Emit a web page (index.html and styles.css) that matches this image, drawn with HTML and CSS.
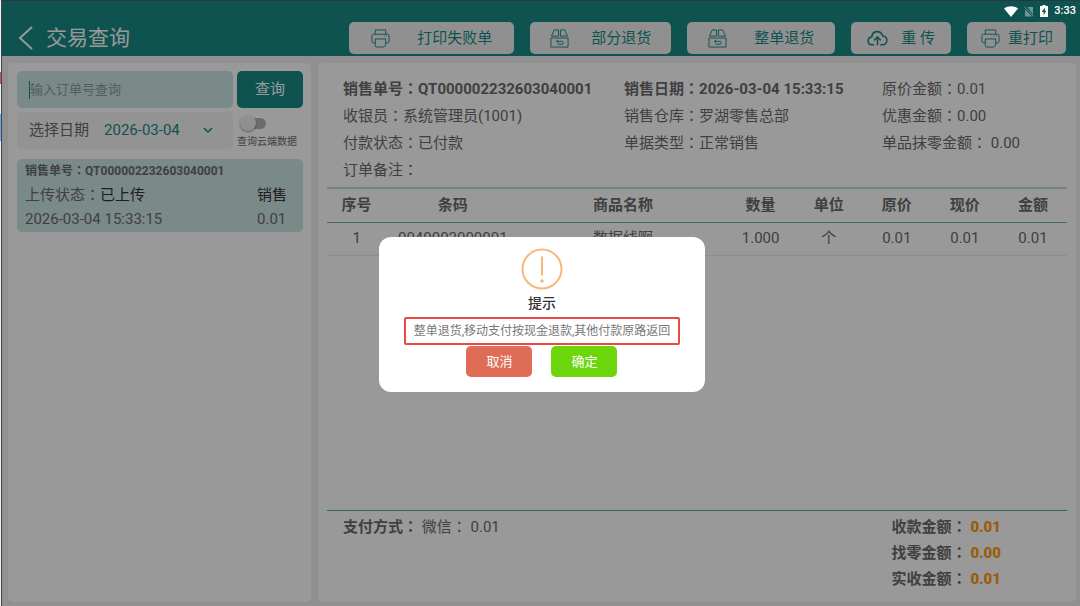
FILE: index.html
```html
<!DOCTYPE html>
<html lang="zh-CN">
<head>
<meta charset="utf-8">
<title>交易查询</title>
<link rel="stylesheet" href="styles.css">
</head>
<body>
<div class="edge"><i class="edge-red"></i><i class="edge-blue"></i></div>
<div class="app">
  <svg width="0" height="0" class="defs" aria-hidden="true">
    <symbol id="printer" viewBox="0 0 20 20">
      <path d="M4.500 5.500V1h11v4.500M4.500 14.500H2.500C1.500 14.500 1 14 1 13V7C1 6 1.500 5.500 2.500 5.500h15c1 0 1.500.500 1.500 1.500v6c0 1-.500 1.500-1.500 1.500h-2M4.500 10.500h11M4.500 10.500V17.500c0 1 .500 1.500 1.500 1.500h7.500l2-2v-6.500M13.500 7.500h.8M15.800 7.500h.8"/>
    </symbol>
    <symbol id="box" viewBox="0 0 20 20">
      <path d="M1 9.500v9.500h18V9.500zM1.500 7.500L4.500 1H9v6.500zM11 1h4.500L18.500 7.500H11zM8.500 11.500L6.800 13l1.700 1.500M6.800 13H13c1.300 0 1.300 3 0 3H8"/>
    </symbol>
    <symbol id="cloud" viewBox="0 0 22 18">
      <path d="M7.500 15.500H5.500C3 15.500 1.200 13.800 1.200 11.500S3 7.500 5 7.300C5.300 4 7.600 1.800 10.700 1.800c2.800 0 5 1.700 5.700 4.500 2.600.2 4.400 2 4.400 4.600s-1.800 4.600-4.300 4.600H14M11 16V8M7.500 11L11 7.500l3.500 3.500"/>
    </symbol>
  </svg>
  <header class="topbar">
    <button class="back" aria-label="返回"><svg viewBox="0 0 16 26"><path d="M14 2L2 13l12 11"/></svg></button>
    <h1 class="title">交易查询</h1>
    <nav class="actions">
      <button class="act act-fail"><svg class="ico"><use href="#printer"/></svg>打印失败单</button>
      <button class="act act-part"><svg class="ico"><use href="#box"/></svg>部分退货</button>
      <button class="act act-whole"><svg class="ico"><use href="#box"/></svg>整单退货</button>
      <button class="act act-upload"><svg class="ico ico-bold"><use href="#cloud"/></svg>重 传</button>
      <button class="act act-reprint"><svg class="ico"><use href="#printer"/></svg>重打印</button>
    </nav>
  </header>
  <main class="content">
    <aside class="panel side">
      <form class="search">
        <div class="field"><i class="caret"></i><input class="query" type="text" placeholder="输入订单号查询" aria-label="输入订单号查询"></div>
        <button class="go" type="button">查询</button>
        <div class="date">
          <label for="day">选择日期</label>
          <select id="day" class="day"><option>2026-03-04</option></select>
          <svg class="chev" viewBox="0 0 10 7"><path d="M1 1l4 4 4-4"/></svg>
        </div>
        <label class="cloud"><input class="switch" type="checkbox"><span>查询云端数据</span></label>
      </form>
      <article class="order">
        <p class="order-no">销售单号<span class="colon" lang="zh-TW">：</span>QT000002232603040001</p>
        <p class="order-row"><span>上传状态<span class="colon" lang="zh-TW">：</span><span class="dark">已上传</span></span><span class="kind dark">销售</span></p>
        <p class="order-row"><span>2026-03-04 15:33:15</span><span class="kind">0.01</span></p>
      </article>
    </aside>
    <section class="panel detail">
      <div class="info">
        <strong>销售单号<span class="colon" lang="zh-TW">：</span>QT000002232603040001</strong>
        <strong>销售日期<span class="colon" lang="zh-TW">：</span>2026-03-04 15:33:15</strong>
        <span>原价金额<span class="colon" lang="zh-TW">：</span>0.01</span>
        <span>收银员<span class="colon" lang="zh-TW">：</span>系统管理员(1001)</span>
        <span>销售仓库<span class="colon" lang="zh-TW">：</span>罗湖零售总部</span>
        <span>优惠金额<span class="colon" lang="zh-TW">：</span>0.00</span>
        <span>付款状态<span class="colon" lang="zh-TW">：</span>已付款</span>
        <span>单据类型<span class="colon" lang="zh-TW">：</span>正常销售</span>
        <span>单品抹零金额<span class="colon" lang="zh-TW">：</span> 0.00</span>
        <span>订单备注<span class="colon" lang="zh-TW">：</span></span>
      </div>
      <table class="goods">
        <colgroup><col class="c-no"><col class="c-code"><col class="c-name"><col><col><col><col><col></colgroup>
        <thead><tr><th>序号</th><th>条码</th><th>商品名称</th><th>数量</th><th>单位</th><th>原价</th><th>现价</th><th>金额</th></tr></thead>
        <tbody><tr><td>1</td><td>0040002000001</td><td>数据线啊</td><td>1.000</td><td>个</td><td>0.01</td><td>0.01</td><td>0.01</td></tr></tbody>
      </table>
      <footer class="pay">
        <p><strong>支付方式<span class="colon" lang="zh-TW">：</span></strong> 微信<span class="colon" lang="zh-TW">：</span> 0.01</p>
        <div class="sums">
          <p>收款金额<span class="colon" lang="zh-TW">：</span> <b>0.01</b></p>
          <p>找零金额<span class="colon" lang="zh-TW">：</span> <b>0.00</b></p>
          <p>实收金额<span class="colon" lang="zh-TW">：</span> <b>0.01</b></p>
        </div>
      </footer>
    </section>
  </main>
  <div class="overlay">
    <div class="dialog" role="dialog" aria-labelledby="tip">
      <svg class="warn" viewBox="0 0 42 42"><circle cx="21" cy="21" r="19.500"/><path d="M21 8.500v19"/><circle class="dot" cx="21" cy="33" r="1.800"/></svg>
      <h2 id="tip" class="tip">提示</h2>
      <p class="msg">整单退货,移动支付按现金退款,其他付款原路返回</p>
      <div class="choices"><button class="btn cancel">取消</button><button class="btn ok">确定</button></div>
    </div>
  </div>
  <div class="status">
    <svg class="s-wifi" viewBox="0 0 14 11"><path d="M0 2.500C4 -.6 10-.6 14 2.500L7 11z"/></svg>
    <svg class="s-sim" viewBox="0 0 10 11"><path d="M3.500 1H9v7.500zM1 3.500L8 10.500H1z"/><path class="slash" d="M.3.800l9.400 9.700"/></svg>
    <svg class="s-bat" viewBox="0 0 8 12"><path fill-rule="evenodd" d="M2.500 0h3v1H8v11H0V1h2.500zM4.800 2.500L1.800 7h1.800v3.200L6.300 5.800H4.800z"/></svg>
    <span>3:33</span>
  </div>
</div>
</body>
</html>
```
FILE: styles.css
```css
* { box-sizing: border-box; margin: 0; padding: 0; }
body {
  display: flex;
  min-height: 100vh;
  font: 15px/27px Roboto, "Noto Sans CJK SC", sans-serif;
  color: #6b6b6b;
}
button, input, select { font: inherit; color: inherit; border: 0; background: none; }
svg { fill: none; stroke: currentColor; display: block; }
.colon { font-family: "Noto Sans CJK TC", sans-serif; line-height: 1; }
.defs { position: absolute; }

.edge { width: 2px; background: #eef1f4; border-right: 1px solid #3c4650; }
.edge i { display: block; }
.edge-red { height: 12px; margin-top: 72px; background: #e5494b; }
.edge-blue { height: 27px; margin-top: 30px; background: #6fa8e8; }

.app {
  position: relative;
  flex: 1;
  display: flex;
  flex-direction: column;
  background: #f0f0f0;
  border-top: 1px solid #2b3646;
}

.topbar {
  display: flex;
  align-items: center;
  padding: 21px 14px 2px 16px;
  background: #198a87;
  color: #fff;
}
.back svg { width: 16px; height: 26px; stroke-width: 2; }
.title { margin-left: 12px; padding-top: 1px; font-size: 21px; font-weight: 400; line-height: 31px; }
.actions { display: flex; gap: 16px; margin-left: auto; }
.act {
  display: flex;
  align-items: center;
  height: 32px;
  border-radius: 5px;
  background: #f0f0f0;
  color: #198a87;
  white-space: nowrap;
}
.ico { width: 19px; height: 19px; stroke-width: 1; }
.ico-bold { width: 21px; stroke-width: 1.6; }
.act-fail { padding: 0 22px; gap: 27px; }
.act-part { padding: 0 20px; gap: 22px; }
.act-whole { padding: 0 21px; gap: 27px; }
.act-upload { padding: 0 16px; gap: 13px; }
.act-reprint { padding: 0 13px 0 14px; gap: 8px; }

.content { flex: 1; display: flex; gap: 7px; padding: 7px 4px 4px 6px; }
.panel { background: #fff; border-radius: 5px; }
.side { flex: 0 0 303px; padding: 8px 8px 8px 9px; }
.search { display: grid; grid-template-columns: 1fr 66px; gap: 4px; }
.field, .date { display: flex; align-items: center; height: 37px; border-radius: 5px; padding-left: 12px; }
.field { background: #cbe6e3; font-size: 13px; }
.caret { width: 1px; height: 18px; background: #198a87; }
.query { flex: 1; min-width: 0; outline: 0; }
.query::placeholder { color: #8c9a98; }
.go { border-radius: 5px; background: #198a87; color: #fff; }
.date { background: #f5f5f5; padding-right: 20px; }
.day { appearance: none; margin-left: 15px; color: #198a87; }
.chev { width: 10px; height: 7px; margin-left: auto; color: #198a87; stroke-width: 1.5; }
.cloud { display: flex; flex-direction: column; justify-content: space-between; padding-top: 3px; font-size: 10px; line-height: 14px; white-space: nowrap; isolation: isolate; }
.switch { appearance: none; width: 29px; height: 16px; padding-left: 3px; display: flex; align-items: center; }
.switch::before { content: ""; width: 16px; height: 16px; border-radius: 8px; background: #f1f1f1; box-shadow: 0 1px 2px #0006; z-index: 1; }
.switch::after { content: ""; width: 18px; height: 11px; margin-left: -8px; border-radius: 6px; background: #b4b4b4; }
.order { margin-top: 10px; padding: 0 16px 1px 8px; border-radius: 5px; background: #cbe6e3; line-height: 24px; }
.order-no { font-size: 12px; font-weight: 700; }
.order-row { display: flex; justify-content: space-between; }
.kind { width: 30px; }
.dark { color: #333; }

.detail { flex: 1; display: flex; flex-direction: column; padding: 13px 9px 10px; }
.info { display: grid; grid-template-columns: 281fr 258fr 185fr; padding: 0 0 3px 16px; white-space: nowrap; }
.goods { width: 100%; table-layout: fixed; border-collapse: collapse; text-align: center; }
.goods th { height: 34px; border-top: 2px solid #b9dcda; border-bottom: 1px solid #6fb3b0; }
.goods td { height: 33px; border-bottom: 1px solid #ececec; }
.c-no { width: 8%; }
.c-code { width: 18%; }
.c-name { width: 28%; }
.pay { display: flex; justify-content: space-between; margin-top: auto; padding: 3px 66px 0 16px; border-top: 1px solid #4fa9a6; line-height: 26px; }
.sums { font-weight: 700; }
.sums b { color: #ff9b1a; }

.overlay {
  position: absolute;
  inset: 0;
  display: flex;
  align-items: center;
  justify-content: center;
  padding: 22px 0 0 2px;
  background: rgba(0, 0, 0, .4);
}
.dialog { display: flex; flex-direction: column; align-items: center; padding: 11px 25px 15px; border-radius: 12px; background: #fff; }
.warn { width: 42px; height: 42px; color: #f9b878; stroke-width: 2; }
.dot { fill: currentColor; stroke: none; }
.tip { font-size: 14px; font-weight: 500; line-height: 27px; color: #333; }
.msg { padding: 0 8px; border: 2px solid #ea4a42; border-radius: 2px; font-size: 12px; line-height: 24px; color: #777; }
.choices { display: flex; gap: 19px; margin-top: 1px; }
.btn { width: 66px; height: 31px; border-radius: 5px; font-size: 13px; color: #fff; }
.cancel { background: #de6c56; }
.ok { background: #6cd60a; }

.status {
  position: absolute;
  top: 3px;
  right: 4px;
  display: flex;
  align-items: center;
  gap: 6px;
  font-size: 11px;
  font-weight: 500;
  line-height: 14px;
  color: #fff;
}
.status svg { fill: currentColor; stroke: none; }
.s-wifi { width: 14px; height: 11px; }
.s-sim { width: 10px; height: 11px; opacity: .4; }
.s-sim .slash { stroke: currentColor; }
.s-bat { width: 8px; height: 12px; }
```
